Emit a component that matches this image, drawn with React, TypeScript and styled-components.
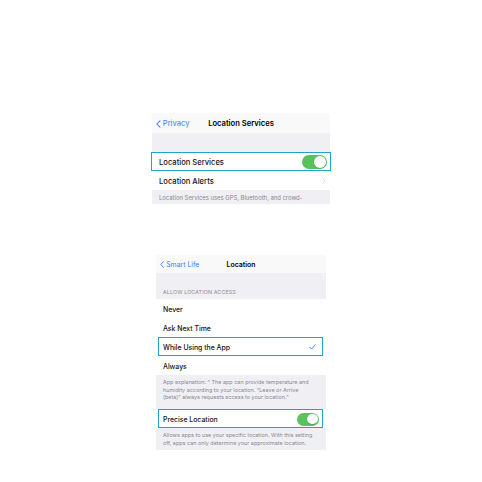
import React from "react";
import styled, { createGlobalStyle } from "styled-components";

const Global = createGlobalStyle`
  html, body { margin: 0; padding: 0; background: #ffffff; }
  body { font-family: "Inter", "Liberation Sans", sans-serif; -webkit-font-smoothing: antialiased; }
  * { box-sizing: border-box; }
`;

const Page = styled.div`
  width: 482px;
  height: 482px;
  display: flex;
  flex-direction: column;
  align-items: flex-start;
  padding-top: 113px;
  overflow: hidden;
`;

const Panel = styled.div<{ $left: number; $width: number; $top?: number }>`
  margin-left: ${(p) => p.$left}px;
  margin-top: ${(p) => p.$top ?? 0}px;
  width: ${(p) => p.$width}px;
  background: #efeff4;
  display: flex;
  flex-direction: column;
`;

const NavBar = styled.div<{ $h: number; $size: number }>`
  height: ${(p) => p.$h}px;
  background: #f9f9fa;
  display: grid;
  grid-template-columns: 1fr auto 1fr;
  align-items: center;
  padding: 1px 4px 0;
  font-size: ${(p) => p.$size}px;
`;

const Back = styled.div`
  display: flex;
  align-items: center;
  gap: 2px;
  color: #3a7df5;
  white-space: nowrap;
`;

const Title = styled.div`
  font-weight: 600;
  color: #000;
  white-space: nowrap;
`;

const Band = styled.div<{ $h: number }>`
  height: ${(p) => p.$h}px;
  display: flex;
  align-items: flex-end;
  padding: 0 7px 4px;
`;

const SectionHeader = styled.div`
  font-size: 5.3px;
  letter-spacing: 0.15px;
  color: #8e8e93;
  text-transform: uppercase;
`;

const Row = styled.div<{ $h: number; $size: number; $pr?: number; $sep?: boolean; $box?: string }>`
  position: relative;
  height: ${(p) => p.$h}px;
  background: #ffffff;
  display: flex;
  align-items: center;
  justify-content: space-between;
  padding: 1px ${(p) => p.$pr ?? 4}px 0 7px;
  font-size: ${(p) => p.$size}px;
  font-weight: 500;
  color: #111;
  white-space: nowrap;
  ${(p) =>
    p.$sep
      ? `&::before { content: ""; position: absolute; left: 7px; right: 0; bottom: 0; height: 0.5px; background: #dcdce0; }`
      : ""}
  ${(p) =>
    p.$box
      ? `&::after { content: ""; position: absolute; inset: ${p.$box}; border: 1.5px solid #1ea3cc; pointer-events: none; }`
      : ""}
`;

const Note = styled.div<{ $h: number; $size: number }>`
  height: ${(p) => p.$h}px;
  overflow: hidden;
  padding: 4px 7px 0;
  font-size: ${(p) => p.$size}px;
  line-height: 7.5px;
  color: #8a8a8f;
  white-space: nowrap;
`;

const Track = styled.div<{ $w: number; $h: number }>`
  width: ${(p) => p.$w}px;
  height: ${(p) => p.$h}px;
  border-radius: ${(p) => p.$h / 2}px;
  background: #59c25d;
  display: flex;
  justify-content: flex-end;
  align-items: center;
  padding: 1.2px;
  flex-shrink: 0;
`;

const Knob = styled.div`
  height: 100%;
  aspect-ratio: 1;
  border-radius: 50%;
  background: #ffffff;
  box-shadow: 0 0.5px 1px rgba(0, 0, 0, 0.25);
`;

const Toggle = ({ w, h }: { w: number; h: number }) => (
  <Track $w={w} $h={h}>
    <Knob />
  </Track>
);

const BackChevron = ({ h }: { h: number }) => (
  <svg width={h * 0.6} height={h} viewBox="0 0 6 10" fill="none">
    <polyline points="5,1 1,5 5,9" stroke="#3a7df5" strokeWidth="1.3" strokeLinecap="round" strokeLinejoin="round" />
  </svg>
);

const Chevron = () => (
  <svg width="4" height="6" viewBox="0 0 4 7" fill="none">
    <polyline points="0.8,0.8 3.2,3.5 0.8,6.2" stroke="#c7c7cc" strokeWidth="0.8" strokeLinecap="round" strokeLinejoin="round" />
  </svg>
);

const Check = () => (
  <svg width="7" height="6" viewBox="0 0 7 6" fill="none">
    <polyline points="0.8,3.3 2.6,5.1 6.2,0.8" stroke="#3a7df5" strokeWidth="0.9" strokeLinecap="round" strokeLinejoin="round" />
  </svg>
);

const Spacer = styled.div``;

export default function App() {
  return (
    <>
      <Global />
      <Page>
        <Panel $left={152} $width={178}>
          <NavBar $h={20} $size={7.6}>
            <Back>
              <BackChevron h={8} />
              Privacy
            </Back>
            <Title>Location Services</Title>
            <Spacer />
          </NavBar>
          <Band $h={19} />
          <Row $h={19} $size={7.6} $pr={3} $box="0 -1px 0 -1px">
            Location Services
            <Toggle w={25} h={14} />
          </Row>
          <Row $h={19} $size={7.6}>
            Location Alerts
            <Chevron />
          </Row>
          <Note $h={14} $size={5.9}>
            Location Services uses GPS, Bluetooth, and crowd-
          </Note>
        </Panel>

        <Panel $left={156} $width={170} $top={51}>
          <NavBar $h={18} $size={6.9}>
            <Back>
              <BackChevron h={7} />
              Smart Life
            </Back>
            <Title>Location</Title>
            <Spacer />
          </NavBar>
          <Band $h={26}>
            <SectionHeader>Allow Location Access</SectionHeader>
          </Band>
          <Row $h={19} $size={6.9} $sep>
            Never
          </Row>
          <Row $h={19} $size={6.9}>
            Ask Next Time
          </Row>
          <Row $h={19} $size={6.9} $pr={10} $box="0 3px 0 2px">
            While Using the App
            <Check />
          </Row>
          <Row $h={19} $size={6.9}>
            Always
          </Row>
          <Note $h={34} $size={5.45}>
            App explanation: “ The app can provide temperature and
            <br />
            humidity according to your location. “Leave or Arrive
            <br />
            (beta)” always requests access to your location.”
          </Note>
          <Row $h={19} $size={6.9} $pr={7} $box="0 3px 0 2px">
            Precise Location
            <Toggle w={22} h={13} />
          </Row>
          <Note $h={22} $size={5.45}>
            Allows apps to use your specific location. With this setting
            <br />
            off, apps can only determine your approximate location.
          </Note>
        </Panel>
      </Page>
    </>
  );
}
